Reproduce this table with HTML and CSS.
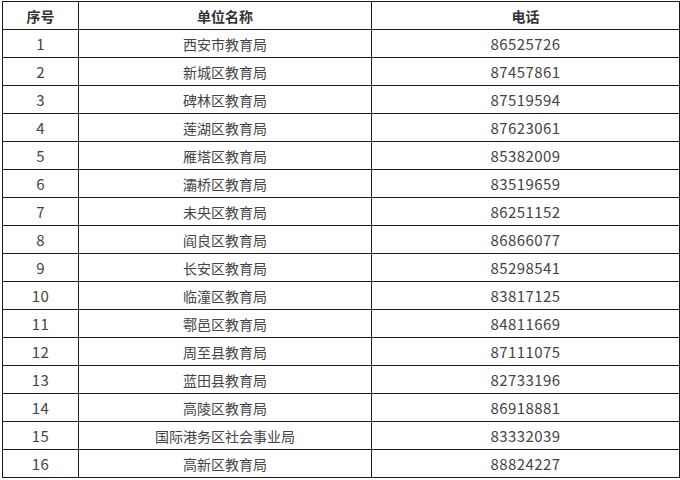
FILE: index.html
```html
<!DOCTYPE html>
<html lang="zh-CN">
<head>
<meta charset="utf-8">
<link rel="stylesheet" href="styles.css">
</head>
<body>
<table class="contacts">
  <colgroup>
    <col class="c-no">
    <col class="c-name">
    <col class="c-tel">
  </colgroup>
  <thead>
    <tr><th>序号</th><th>单位名称</th><th>电话</th></tr>
  </thead>
  <tbody>
    <tr><td>1</td><td>西安市教育局</td><td>86525726</td></tr>
    <tr><td>2</td><td>新城区教育局</td><td>87457861</td></tr>
    <tr><td>3</td><td>碑林区教育局</td><td>87519594</td></tr>
    <tr><td>4</td><td>莲湖区教育局</td><td>87623061</td></tr>
    <tr><td>5</td><td>雁塔区教育局</td><td>85382009</td></tr>
    <tr><td>6</td><td>灞桥区教育局</td><td>83519659</td></tr>
    <tr><td>7</td><td>未央区教育局</td><td>86251152</td></tr>
    <tr><td>8</td><td>阎良区教育局</td><td>86866077</td></tr>
    <tr><td>9</td><td>长安区教育局</td><td>85298541</td></tr>
    <tr><td>10</td><td>临潼区教育局</td><td>83817125</td></tr>
    <tr><td>11</td><td>鄠邑区教育局</td><td>84811669</td></tr>
    <tr><td>12</td><td>周至县教育局</td><td>87111075</td></tr>
    <tr><td>13</td><td>蓝田县教育局</td><td>82733196</td></tr>
    <tr><td>14</td><td>高陵区教育局</td><td>86918881</td></tr>
    <tr><td>15</td><td>国际港务区社会事业局</td><td>83332039</td></tr>
    <tr><td>16</td><td>高新区教育局</td><td>88824227</td></tr>
  </tbody>
</table>
</body>
</html>
```

FILE: styles.css
```css
html, body {
  margin: 0;
  padding: 0;
  background: #ffffff;
}

body {
  padding: 1px 0 0 2px;
  font-family: "Noto Sans CJK SC", "Noto Sans", sans-serif;
  color: #444444;
}

.contacts {
  border-collapse: collapse;
  table-layout: fixed;
  width: 677px;
}

.c-no { width: 76px; }
.c-name { width: 293px; }
.c-tel { width: 308px; }

.contacts th,
.contacts td {
  border: 1px solid #1a1a1a;
  height: 27px;
  padding: 0;
  text-align: center;
  vertical-align: middle;
  font-size: 14px;
  line-height: 16px;
}

.contacts th {
  font-weight: bold;
  color: #333333;
}

.contacts td:nth-child(1),
.contacts td:nth-child(3) {
  font-size: 15px;
  letter-spacing: 0.4px;
}
```
